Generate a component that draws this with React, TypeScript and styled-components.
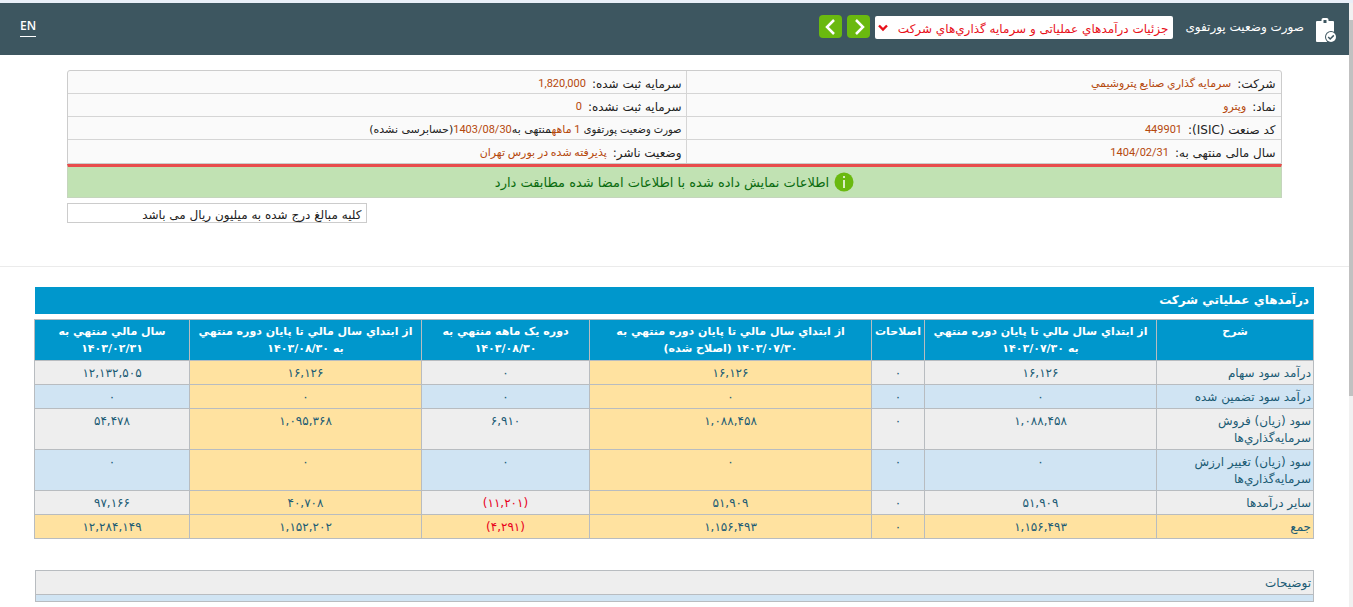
import React from "react";
import styled, { createGlobalStyle } from "styled-components";

const GlobalStyle = createGlobalStyle`
  * { box-sizing: border-box; }
  body {
    margin: 0;
    background: #fff;
    font-family: "DejaVu Sans", sans-serif;
    font-size: 12px;
    line-height: 17px;
    color: #222;
  }
`;

const Shell = styled.div`
  display: flex;
  min-height: 100vh;
  border-top: 3px solid #e9eff8;
`;

const Page = styled.div`
  flex: 1;
  min-width: 0;
`;

const ScrollTrack = styled.div`
  width: 4px;
  padding-top: 17px;
  background: #f1f1f1;
`;

const ScrollThumb = styled.div`
  height: 376px;
  background: #c1c1c1;
`;

const TopBar = styled.header`
  display: flex;
  align-items: flex-start;
  height: 52px;
  padding: 12px 12px 0 20px;
  background: #3d5660;
  color: #fff;
`;

const ReportName = styled.label`
  margin: 2px 11px 0 12px;
  font-size: 12px;
  line-height: 20px;
`;

const ReportIcon = styled.svg`
  width: 22px;
  height: 26px;
  margin-top: 2px;
`;

const SelectBox = styled.div`
  display: grid;
  width: 298px;
  margin-top: 1px;
  > * { grid-area: 1 / 1; }
`;

const Select = styled.select`
  appearance: none;
  height: 23px;
  width: 100%;
  padding: 2px 5px 0;
  border: 0;
  border-radius: 2px;
  background: #fff;
  color: #e8101a;
  font-family: inherit;
  font-size: 12px;
`;

const Chevron = styled.svg`
  width: 10px;
  height: 8px;
  margin-left: 3px;
  justify-self: end;
  align-self: center;
  pointer-events: none;
`;

const NavButton = styled.button`
  display: grid;
  place-items: center;
  width: 23px;
  height: 23px;
  margin-right: 5px;
  padding: 0;
  border: 0;
  border-radius: 4px;
  background: #6ab90f;
  svg { width: 12px; height: 18px; }
`;

const LangLink = styled.a`
  margin: 3px auto 0 0;
  padding-bottom: 2px;
  border-bottom: 1px solid #fff;
  color: #fff;
  font-family: "Open Sans", sans-serif;
  font-weight: 600;
  line-height: 16px;
  text-decoration: none;
`;

const Summary = styled.section`
  width: 90%;
  margin: 15px auto 0;
`;

const InfoGrid = styled.dl`
  display: grid;
  grid-template-columns: 595fr 619fr;
  margin: 0;
  border: 1px solid #ccc;
  border-radius: 3px 3px 0 0;
  background: #fafafa;
`;

const InfoItem = styled.div<{ $last?: boolean; $tight?: boolean }>`
  display: flex;
  height: 23px;
  padding: 5px 5px 0;
  border-bottom: ${(p) => (p.$last ? "0" : "1px solid #d5d5d5")};
  white-space: pre;
  &:nth-child(odd) { border-left: 1px solid #d5d5d5; }
  dt, dd { margin: 0; }
  dt {
    font-family: ${(p) => (p.$tight ? '"DejaVu Sans Condensed", ' : "")}"DejaVu Sans", sans-serif;
    font-size: ${(p) => (p.$tight ? "11px" : "12px")};
    line-height: ${(p) => (p.$tight ? "15px" : "17px")};
  }
  dd {
    margin-right: ${(p) => (p.$tight ? "0" : "6px")};
    font-family: Roboto, "DejaVu Sans", sans-serif;
    font-size: 11px;
    line-height: 15px;
    color: #b5480c;
  }
  dd > span {
    font-family: "DejaVu Sans", sans-serif;
    color: #222;
  }
`;

const SignedNotice = styled.p`
  display: flex;
  justify-content: center;
  align-items: center;
  gap: 5px;
  height: 34px;
  margin: 0;
  border: 1px solid #c5d5bd;
  border-top: 3px solid #e84c4c;
  background: #c1e2b3;
  color: #0a6b0f;
  font-size: 13px;
  svg { width: 20px; height: 20px; }
`;

const UnitNote = styled.p`
  width: 300px;
  height: 20px;
  margin: 5px auto 0 0;
  padding: 3px 5px 0;
  border: 1px solid #ccc;
`;

const Statement = styled.main`
  margin-top: 43px;
  padding: 20px 35px 0;
  border-top: 1px solid #ebebeb;
`;

const StatementTitle = styled.h1`
  height: 27px;
  margin: 0 0 5px;
  padding: 5px 5px 0;
  background: #0097cc;
  color: #fff;
  font-size: 12px;
  line-height: 17px;
`;

const DataTable = styled.table`
  width: 100%;
  table-layout: fixed;
  border-collapse: collapse;
  color: #1b5b74;
`;

const HeadCell = styled.th`
  padding: 3px 0;
  border: 1px solid #b8bcc0;
  background: #0097cc;
  color: #fff;
  font-size: 11px;
  white-space: nowrap;
  vertical-align: top;
`;

type Tone = "grey" | "blue" | "yellow";
const tones: Record<Tone, string> = { grey: "#eee", blue: "#d0e4f3", yellow: "#ffe2a0" };

const RowHead = styled.th<{ $tone: Tone }>`
  padding: 4px 2px 2px;
  border: 1px solid #b8bcc0;
  background: ${(p) => tones[p.$tone]};
  font-size: 12px;
  font-weight: 400;
  text-align: right;
  vertical-align: top;
`;

const Cell = styled.td<{ $tone: Tone; $negative: boolean }>`
  padding: 4px 2px 2px;
  border: 1px solid #b8bcc0;
  background: ${(p) => tones[p.$tone]};
  color: ${(p) => (p.$negative ? "#e8001c" : "inherit")};
  text-align: center;
  vertical-align: top;
`;

const Notes = styled.section`
  margin-top: 31px;
  border: 1px solid #b8bcc0;
  background: ${tones.blue};
  color: #1b5b74;
`;

const NotesTitle = styled.h2`
  height: 24px;
  margin: 0 0 6px;
  padding: 4px 2px 2px;
  border-bottom: 1px solid #b8bcc0;
  background: ${tones.grey};
  font-size: 12px;
  font-weight: 400;
`;

const columns = [
  { title: ["شرح"], width: 157 },
  { title: ["از ابتداي سال مالي تا پايان دوره منتهي", "به ۱۴۰۳/۰۷/۳۰"], width: 232 },
  { title: ["اصلاحات"], width: 53 },
  { title: ["از ابتداي سال مالي تا پايان دوره منتهي به", "۱۴۰۳/۰۷/۳۰ (اصلاح شده)"], width: 282, accent: true },
  { title: ["دوره يک ماهه منتهي به", "۱۴۰۳/۰۸/۳۰"], width: 168 },
  { title: ["از ابتداي سال مالي تا پايان دوره منتهي", "به ۱۴۰۳/۰۸/۳۰"], width: 232, accent: true },
  { title: ["سال مالي منتهي به", "۱۴۰۳/۰۲/۳۱"], width: 155 },
];

const rows: { label: string; tone: Tone; values: string[] }[] = [
  { label: "درآمد سود سهام", tone: "grey", values: ["۱۶,۱۲۶", "۰", "۱۶,۱۲۶", "۰", "۱۶,۱۲۶", "۱۲,۱۳۲,۵۰۵"] },
  { label: "درآمد سود تضمين شده", tone: "blue", values: ["۰", "۰", "۰", "۰", "۰", "۰"] },
  { label: "سود (زيان) فروش سرمايه‌گذاري‌ها", tone: "grey", values: ["۱,۰۸۸,۴۵۸", "۰", "۱,۰۸۸,۴۵۸", "۶,۹۱۰", "۱,۰۹۵,۳۶۸", "۵۴,۴۷۸"] },
  { label: "سود (زيان) تغيير ارزش سرمايه‌گذاري‌ها", tone: "blue", values: ["۰", "۰", "۰", "۰", "۰", "۰"] },
  { label: "ساير درآمدها", tone: "grey", values: ["۵۱,۹۰۹", "۰", "۵۱,۹۰۹", "(۱۱,۲۰۱)", "۴۰,۷۰۸", "۹۷,۱۶۶"] },
  { label: "جمع", tone: "yellow", values: ["۱,۱۵۶,۴۹۳", "۰", "۱,۱۵۶,۴۹۳", "(۴,۲۹۱)", "۱,۱۵۲,۲۰۲", "۱۲,۲۸۴,۱۴۹"] },
];

export default function App() {
  return (
    <>
      <GlobalStyle />
      <Shell>
        <Page dir="rtl" lang="fa">
          <TopBar>
            <ReportIcon viewBox="0 0 22 26" aria-hidden="true">
              <path
                fill="#fff"
                fillRule="evenodd"
                d="M2 4h4.500V2.800Q6.500 1 8.300 1h3.400q1.800 0 1.800 1.800V4H18q1 0 1 1v19q0 1-1 1H2q-1 0-1-1V5q0-1 1-1zM8.500 3v3h3V3z"
              />
              <circle cx="16" cy="20" r="6" fill="#3d5660" />
              <circle cx="16" cy="20" r="5" fill="#fff" />
              <path d="M13.200 20l2 2 3.600-3.600" fill="none" stroke="#3d5660" strokeWidth="1.500" />
            </ReportIcon>
            <ReportName htmlFor="sheet">صورت وضعیت پورتفوی</ReportName>
            <SelectBox>
              <Select id="sheet">
                <option>جزئیات درآمدهاي عملیاتی و سرمایه گذاري‌هاي شرکت</option>
              </Select>
              <Chevron viewBox="0 0 10 8" aria-hidden="true">
                <path d="M1 1.500l4 4 4-4" fill="none" stroke="#e8101a" strokeWidth="2.400" />
              </Chevron>
            </SelectBox>
            <NavButton type="button" aria-label="بعدی">
              <svg viewBox="0 0 12 18" aria-hidden="true">
                <path d="M3 2l7 7-7 7" fill="none" stroke="#fff" strokeWidth="2.500" />
              </svg>
            </NavButton>
            <NavButton type="button" aria-label="قبلی">
              <svg viewBox="0 0 12 18" aria-hidden="true">
                <path d="M9 2L2 9l7 7" fill="none" stroke="#fff" strokeWidth="2.500" />
              </svg>
            </NavButton>
            <LangLink href="#en">EN</LangLink>
          </TopBar>

          <Summary>
            <InfoGrid>
              <InfoItem><dt>شرکت:</dt><dd>سرمايه گذاري صنايع پتروشيمي</dd></InfoItem>
              <InfoItem><dt>سرمایه ثبت شده:</dt><dd>1,820,000</dd></InfoItem>
              <InfoItem><dt>نماد:</dt><dd>وپترو</dd></InfoItem>
              <InfoItem><dt>سرمایه ثبت نشده:</dt><dd>0</dd></InfoItem>
              <InfoItem><dt>کد صنعت (ISIC):</dt><dd>449901</dd></InfoItem>
              <InfoItem $tight>
                <dt>صورت وضعیت پورتفوی </dt>
                <dd>1 ماهه<span>منتهی به</span>1403/08/30<span>(حسابرسی نشده)</span></dd>
              </InfoItem>
              <InfoItem $last><dt>سال مالی منتهی به:</dt><dd>1404/02/31</dd></InfoItem>
              <InfoItem $last><dt>وضعیت ناشر:</dt><dd>پذیرفته شده در بورس تهران</dd></InfoItem>
            </InfoGrid>
            <SignedNotice>
              <svg viewBox="0 0 20 20" aria-hidden="true">
                <circle cx="10" cy="10" r="9.500" fill="#6ab90f" />
                <path d="M10 4v2M10 8v8" stroke="#fff" strokeWidth="1.500" />
              </svg>
              اطلاعات نمایش داده شده با اطلاعات امضا شده مطابقت دارد
            </SignedNotice>
            <UnitNote>کلیه مبالغ درج شده به میلیون ریال می باشد</UnitNote>
          </Summary>

          <Statement>
            <StatementTitle>درآمدهاي عملياتي شرکت</StatementTitle>
            <DataTable>
              <colgroup>
                {columns.map((c, i) => <col key={i} width={c.width} />)}
              </colgroup>
              <thead>
                <tr>
                  {columns.map((c, i) => (
                    <HeadCell key={i} scope="col">
                      {c.title[0]}
                      {c.title[1] && <><br />{c.title[1]}</>}
                    </HeadCell>
                  ))}
                </tr>
              </thead>
              <tbody>
                {rows.map((r) => (
                  <tr key={r.label}>
                    <RowHead scope="row" $tone={r.tone}>{r.label}</RowHead>
                    {r.values.map((v, i) => (
                      <Cell key={i} $tone={columns[i + 1].accent ? "yellow" : r.tone} $negative={v.startsWith("(")}>
                        {v}
                      </Cell>
                    ))}
                  </tr>
                ))}
              </tbody>
            </DataTable>
            <Notes>
              <NotesTitle>توضيحات</NotesTitle>
            </Notes>
          </Statement>
        </Page>
        <ScrollTrack aria-hidden="true"><ScrollThumb /></ScrollTrack>
      </Shell>
    </>
  );
}
